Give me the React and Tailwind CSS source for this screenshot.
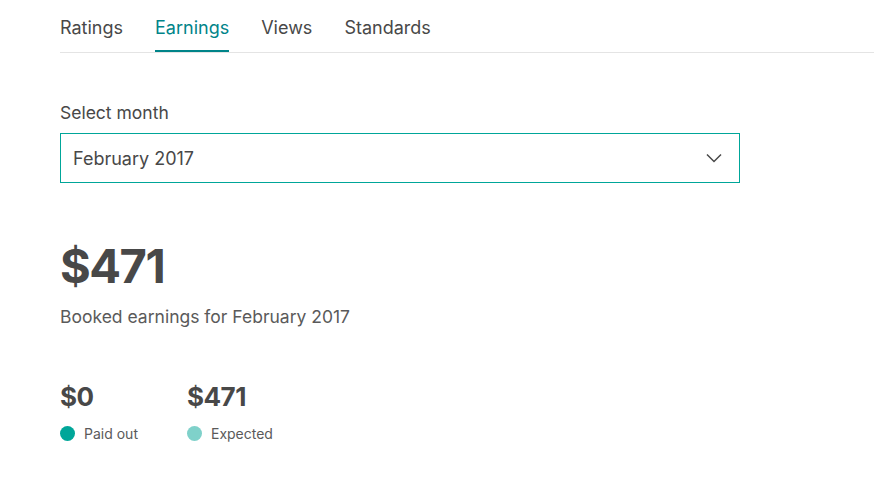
import React, { useState } from "react";

const tabs = ["Ratings", "Earnings", "Views", "Standards"];

const Chevron = () => (
  <svg width="16" height="10" viewBox="0 0 16 10" fill="none">
    <path d="M1 1.5l7 7 7-7" stroke="#484848" strokeWidth="1.5" />
  </svg>
);

export default function App() {
  const [active, setActive] = useState("Earnings");

  return (
    <div className="min-h-[500px] bg-white pl-[60px] text-[#484848] font-['Inter',sans-serif]">
      {/* tabs */}
      <div className="flex gap-[32px] border-b border-[#e4e4e4] h-[53px] items-stretch">
        {tabs.map((t) => (
          <button
            key={t}
            onClick={() => setActive(t)}
            className={`pt-[6px] text-[18px] leading-[26px] border-b-2 ${
              active === t ? "border-[#008489] text-[#008489]" : "border-transparent text-[#484848]"
            }`}
          >
            {t}
          </button>
        ))}
      </div>

      {/* month select */}
      <div className="mt-[48px]">
        <div className="text-[17.5px] leading-[24px]">Select month</div>
        <div className="mt-[8px] w-[680px] h-[50px] border border-[#00a699] flex items-center justify-between pl-[12px] pr-[17px]">
          <span className="text-[18px]">February 2017</span>
          <Chevron />
        </div>
      </div>

      {/* total */}
      <div className="mt-[52px]">
        <div className="text-[47px] font-bold leading-[62px] tracking-[-1.5px]">$471</div>
        <div className="mt-[8px] text-[17.5px] leading-[24px] text-[#5a5a5a]">Booked earnings for February 2017</div>
      </div>

      {/* breakdown */}
      <div className="mt-[52px] flex gap-[49px]">
        <div>
          <div className="text-[26px] font-bold leading-[32px] tracking-[-0.5px]">$0</div>
          <div className="mt-[10px] flex items-center gap-[9px]">
            <span className="w-[15px] h-[15px] rounded-full bg-[#00a699]" />
            <span className="text-[14px] text-[#5a5a5a]">Paid out</span>
          </div>
        </div>
        <div>
          <div className="text-[26px] font-bold leading-[32px] tracking-[-0.5px]">$471</div>
          <div className="mt-[10px] flex items-center gap-[9px]">
            <span className="w-[15px] h-[15px] rounded-full bg-[#7fd1ca]" />
            <span className="text-[14px] text-[#5a5a5a]">Expected</span>
          </div>
        </div>
      </div>
    </div>
  );
}
